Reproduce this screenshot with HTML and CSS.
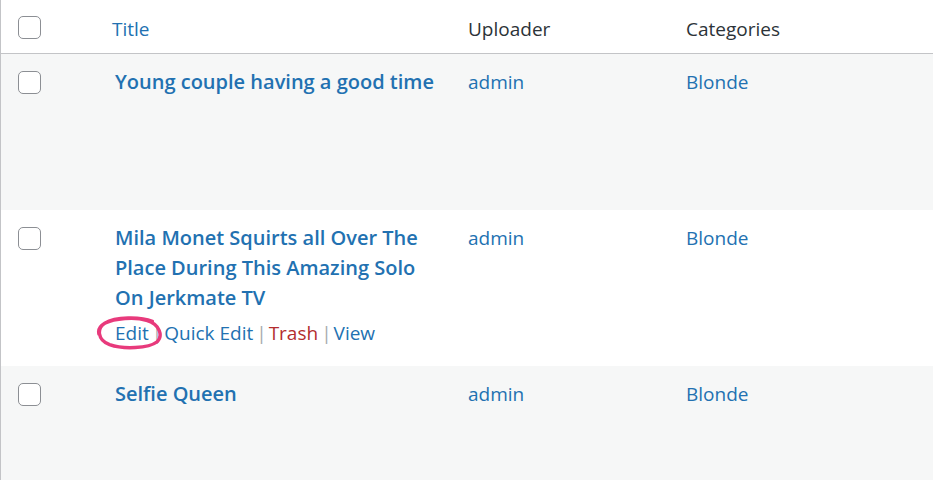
FILE: index.html
```html
<!DOCTYPE html>
<html lang="en">
<head>
    <meta charset="UTF-8">
    <meta name="viewport" content="width=device-width, initial-scale=1.0">
    <title>Videos</title>
    <link rel="stylesheet" href="styles.css">
</head>
<body>
    <div class="list-table">
        <!-- Header -->
        <div class="row head">
            <div class="cell check"><span class="cb"></span></div>
            <div class="cell title"><a href="#">Title</a></div>
            <div class="cell">Uploader</div>
            <div class="cell">Categories</div>
        </div>

        <div class="row alt">
            <div class="cell check"><span class="cb"></span></div>
            <div class="cell title"><a class="post-title" href="#">Young couple having a good time</a></div>
            <div class="cell"><a href="#">admin</a></div>
            <div class="cell"><a href="#">Blonde</a></div>
        </div>

        <div class="row">
            <div class="cell check"><span class="cb"></span></div>
            <div class="cell title">
                <a class="post-title" href="#">Mila Monet Squirts all Over The Place During This Amazing Solo On Jerkmate TV</a>
                <div class="row-actions">
                    <span class="edit-mark"><a href="#">Edit</a><svg class="circle" viewBox="0 0 70 36" width="68" height="36">
                            <path d="M58 6 C46 1 20 1 9 8 C1 13 1 25 14 30 C28 35 54 34 63 27 C69 21 66 9 52 5 C40 1 19 3 9 8 C4 11 2 15 3 19" fill="none" stroke="#e83a7c" stroke-width="3.5" stroke-linecap="round"/>
                        </svg></span><span class="sep">|</span><a href="#">Quick Edit</a><span class="sep">|</span><a class="trash" href="#">Trash</a><span class="sep">|</span><a href="#">View</a>
                </div>
            </div>
            <div class="cell"><a href="#">admin</a></div>
            <div class="cell"><a href="#">Blonde</a></div>
        </div>

        <div class="row alt">
            <div class="cell check"><span class="cb"></span></div>
            <div class="cell title"><a class="post-title" href="#">Selfie Queen</a></div>
            <div class="cell"><a href="#">admin</a></div>
            <div class="cell"><a href="#">Blonde</a></div>
        </div>
    </div>
</body>
</html>
```

FILE: styles.css
```css
html {
  overflow: hidden;
}

body {
  margin: 0;
  background-color: #fff;
  font-family: "Open Sans", Arial, sans-serif;
  font-size: 19px;
  color: #2c3338;
}

a {
  color: #2271b1;
  text-decoration: none;
}

.list-table {
  border-left: 1px solid #c3c4c7;
}

.row {
  display: grid;
  grid-template-columns: 96px 355px 218px 1fr;
  height: 156px;
  line-height: 30px;
}

.row.head {
  height: 53px;
  border-bottom: 1px solid #c3c4c7;
}

.row.alt {
  background-color: #f6f7f7;
}

.row:last-child {
  height: 114px;
}

.cell {
  padding: 13px 16px 0;
}

.row.head .cell {
  padding-top: 14px;
}

.cell.check {
  padding: 17px 0 0 17px;
}

.row.head .cell.check {
  padding-top: 16px;
}

.cb {
  display: block;
  width: 21px;
  height: 21px;
  border: 1px solid #8c8f94;
  border-radius: 5px;
  background-color: #fff;
}

.cell.title {
  padding-left: 18px;
}

.row.head .cell.title {
  padding-left: 15px;
}

.post-title {
  font-weight: 600;
  font-size: 20px;
}

/* Row actions */
.row-actions {
  margin-top: 5px;
}

.row-actions .sep {
  color: #a7aaad;
  padding: 0 2px 0 3px;
}

.row-actions .trash {
  color: #b32d2e;
}

.edit-mark {
  position: relative;
}

.edit-mark .circle {
  position: absolute;
  left: -19px;
  top: -5px;
}
```
